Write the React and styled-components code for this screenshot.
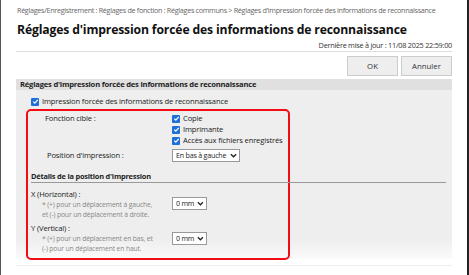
import React from "react";
import styled, { createGlobalStyle } from "styled-components";

const GlobalStyle = createGlobalStyle`
  html, body { margin: 0; padding: 0; background: #fff; }
  body { font-family: "Open Sans", "Noto Sans", sans-serif; color: #222; }
`;

const Frame = styled.div`
  width: 469px;
  height: 275px;
  box-sizing: border-box;
  border-left: 1px solid #555;
  border-right: 2px solid #222;
  overflow: hidden;
  background: #fff;
`;

const Content = styled.div`
  padding: 4px 15px 0 15px;
  display: flex;
  flex-direction: column;
`;

const Breadcrumb = styled.div`
  font-size: 7.2px;
  color: #666;
  letter-spacing: -0.3px;
  white-space: nowrap;
  height: 13px;
  line-height: 13px;
  padding-left: 1px;
`;

const Title = styled.h1`
  margin: 4px 0 0;
  padding-left: 1px;
  font-size: 12.2px;
  font-weight: 700;
  color: #111;
  letter-spacing: -0.15px;
  line-height: 17px;
`;

const Updated = styled.div`
  text-align: right;
  font-size: 7.3px;
  color: #333;
  letter-spacing: -0.25px;
  margin-top: 2px;
  line-height: 11px;
`;

const Rule = styled.div`
  height: 1px;
  background: #ddd;
`;

const ButtonBar = styled.div`
  display: flex;
  justify-content: flex-end;
  gap: 3px;
  margin-top: 4px;
`;

const Button = styled.button`
  width: 51px;
  height: 20px;
  box-sizing: border-box;
  border: 1px solid #ccc;
  background: #eee;
  font-family: inherit;
  font-size: 7.8px;
  color: #333;
  padding: 0;
`;

const Panel = styled.div`
  margin-top: 3px;
  background: linear-gradient(#eee 0, #eee 160px, #fafafa 179px);
  height: 180px;
  display: flex;
  flex-direction: column;
`;

const PanelHeader = styled.div`
  background: #e0e0e0;
  height: 11px;
  line-height: 11px;
  padding-left: 4px;
  font-size: 7.6px;
  font-weight: 700;
  color: #222;
  letter-spacing: -0.2px;
  white-space: nowrap;
`;

const PanelBody = styled.div`
  padding: 6px 0 0 15px;
  display: flex;
  flex-direction: column;
`;

const CheckRow = styled.label`
  display: flex;
  align-items: center;
  gap: 3px;
  font-size: 7.6px;
  line-height: 11px;
  height: 11px;
  color: #222;
  letter-spacing: -0.15px;
  white-space: nowrap;
`;

const Box = styled.span`
  width: 8px;
  height: 8px;
  border-radius: 1px;
  background: #1f6fd8;
  display: inline-flex;
  align-items: center;
  justify-content: center;
  flex: none;
`;

const Highlight = styled.div`
  margin-top: 2px;
  margin-left: -5px;
  width: 264px;
  height: 151px;
  box-sizing: border-box;
  border: 2px solid #f20d16;
  border-radius: 5px;
  padding: 2px 0 0 3px;
  display: flex;
  flex-direction: column;
`;

const FieldRow = styled.div`
  display: grid;
  grid-template-columns: 141px auto;
  align-items: ${(p) => p.$align || "start"};
  justify-items: start;
  margin-top: ${(p) => p.$top || 0}px;
`;

const FieldLabel = styled.div`
  font-size: 7.6px;
  line-height: 11px;
  color: #222;
  letter-spacing: -0.15px;
  white-space: nowrap;
  padding-left: ${(p) => p.$indent || 0}px;
`;

const Options = styled.div`
  display: flex;
  flex-direction: column;
`;

const Select = styled.div`
  height: 13px;
  box-sizing: border-box;
  border: 1px solid #999;
  background: #fff;
  display: flex;
  align-items: center;
  justify-content: space-between;
  gap: 3px;
  padding: 0 2px 0 3px;
  font-size: 7.1px;
  line-height: 11px;
  white-space: nowrap;
  color: #222;
  width: ${(p) => p.$width}px;
  margin-top: ${(p) => p.$top || 0}px;
  letter-spacing: -0.2px;
`;

const SectionTitle = styled.div`
  margin-top: 9px;
  font-size: 7.4px;
  font-weight: 700;
  color: #222;
  letter-spacing: -0.2px;
  line-height: 11px;
  width: 415px;
  border-bottom: 1px solid #999;
  white-space: nowrap;
`;

const Note = styled.div`
  font-size: 6.8px;
  line-height: 10px;
  color: #888;
  padding-left: 11px;
  letter-spacing: -0.15px;
  white-space: nowrap;
`;

const Footer = styled.div`
  margin-top: 6px;
  border-top: 1px solid #eee;
  height: 12px;
`;

function Check() {
  return (
    <Box>
      <svg width="7" height="7" viewBox="0 0 10 10">
        <path d="M1.8 5.2 L4 7.4 L8.3 2.6" fill="none" stroke="#fff" strokeWidth="1.8" />
      </svg>
    </Box>
  );
}

function Chevron() {
  return (
    <svg width="7" height="5" viewBox="0 0 8 5">
      <path d="M1 1 L4 4 L7 1" fill="none" stroke="#222" strokeWidth="1.5" />
    </svg>
  );
}

export default function App() {
  return (
    <>
      <GlobalStyle />
      <Frame>
        <Content>
          <Breadcrumb>
            Réglages/Enregistrement : Réglages de fonction : Réglages communs &gt; Réglages d'impression forcée des informations de reconnaissance
          </Breadcrumb>
          <Title>Réglages d'impression forcée des informations de reconnaissance</Title>
          <Updated>Dernière mise à jour : 11/08 2025 22:59:00</Updated>
          <Rule />
          <ButtonBar>
            <Button>OK</Button>
            <Button>Annuler</Button>
          </ButtonBar>
          <Panel>
            <PanelHeader>Réglages d'impression forcée des informations de reconnaissance</PanelHeader>
            <PanelBody>
              <CheckRow>
                <Check />
                Impression forcée des informations de reconnaissance
              </CheckRow>
              <Highlight>
                <FieldRow>
                  <FieldLabel $indent={14}>Fonction cible :</FieldLabel>
                  <Options>
                    <CheckRow><Check />Copie</CheckRow>
                    <CheckRow><Check />Imprimante</CheckRow>
                    <CheckRow><Check />Accès aux fichiers enregistrés</CheckRow>
                  </Options>
                </FieldRow>
                <FieldRow $top={3} $align="center">
                  <FieldLabel $indent={16}>Position d'impression :</FieldLabel>
                  <Select $width={68}>En bas à gauche<Chevron /></Select>
                </FieldRow>
                <SectionTitle>Détails de la position d'impression</SectionTitle>
                <FieldRow $top={6}>
                  <div>
                    <FieldLabel>X (Horizontal) :</FieldLabel>
                    <Note>* (+) pour un déplacement à gauche,</Note>
                    <Note>et (-) pour un déplacement à droite.</Note>
                  </div>
                  <Select $width={35} $top={8}>0 mm<Chevron /></Select>
                </FieldRow>
                <FieldRow $top={3}>
                  <div>
                    <FieldLabel>Y (Vertical) :</FieldLabel>
                    <Note>* (+) pour un déplacement en bas, et</Note>
                    <Note>(-) pour un déplacement en haut.</Note>
                  </div>
                  <Select $width={35} $top={9}>0 mm<Chevron /></Select>
                </FieldRow>
              </Highlight>
            </PanelBody>
          </Panel>
          <Footer />
        </Content>
      </Frame>
    </>
  );
}
